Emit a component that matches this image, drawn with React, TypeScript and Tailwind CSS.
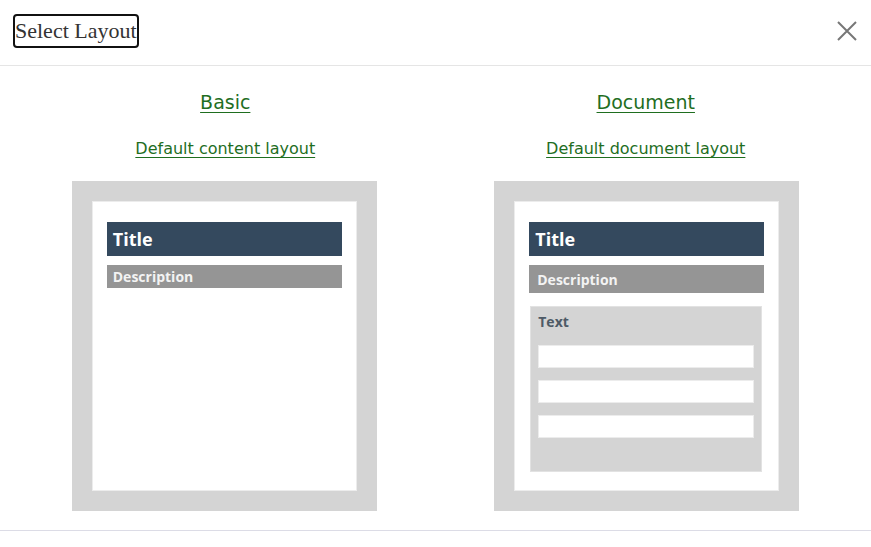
import React from "react";

function BasicPreview() {
  return (
    <div className="bg-[#d4d4d4] p-5 w-[305px] h-[330px]">
      <div className="bg-white h-full px-[14px] pt-[20px] border border-[#ececec]">
        <div className="bg-[#34495e] h-[34px] flex items-center px-[6px] text-white text-[18px] font-bold font-['Open_Sans',sans-serif]">
          Title
        </div>
        <div className="mt-[9px] bg-[#959595] h-[23px] flex items-center px-[6px] text-[#f3f3f3] text-[14px] font-bold font-['Open_Sans',sans-serif]">
          Description
        </div>
      </div>
    </div>
  );
}

function DocumentPreview() {
  return (
    <div className="bg-[#d4d4d4] p-5 w-[305px] h-[330px]">
      <div className="bg-white h-full px-[14px] pt-[20px] border border-[#ececec]">
        <div className="bg-[#34495e] h-[34px] flex items-center px-[6px] text-white text-[18px] font-bold font-['Open_Sans',sans-serif]">
          Title
        </div>
        <div className="mt-[9px] bg-[#959595] h-[28px] flex items-center px-[8px] text-[#f3f3f3] text-[14px] font-bold font-['Open_Sans',sans-serif]">
          Description
        </div>
        <div className="mt-[13px] ml-[1px] mr-[2px] bg-[#d4d4d4] h-[166px] border border-[#e2e2e2] px-[7px] pt-[5px]">
          <div className="text-[#4e5a66] text-[14px] font-bold font-['Open_Sans',sans-serif] leading-[20px]">
            Text
          </div>
          <div className="mt-[13px] flex flex-col gap-[12px]">
            <div className="bg-white h-[23px] border border-[#ececec]" />
            <div className="bg-white h-[23px] border border-[#ececec]" />
            <div className="bg-white h-[23px] border border-[#ececec]" />
          </div>
        </div>
      </div>
    </div>
  );
}

const layouts = [
  { name: "Basic", desc: "Default content layout", preview: <BasicPreview />, shift: "-ml-[2px]" },
  { name: "Document", desc: "Default document layout", preview: <DocumentPreview />, shift: "ml-[2px]" },
];

export default function App() {
  return (
    <div className="w-[871px] h-[547px] bg-white">
      {/* Header */}
      <div className="h-[66px] border-b border-[#e5e5e5] flex items-start justify-between pl-[13px] pr-[12px] pt-[14px]">
        <h2 className="border-2 border-[#111] rounded-[4px] h-[34px] flex items-center text-[22px] text-[#333] font-['Liberation_Serif',serif] leading-none">
          Select Layout
        </h2>
        <button className="mt-[5px] w-[24px] h-[24px] flex items-center justify-center text-[#777]">
          <svg width="22" height="22" viewBox="0 0 22 22" fill="none" stroke="currentColor" strokeWidth="2">
            <path d="M2 2 L20 20 M20 2 L2 20" />
          </svg>
        </button>
      </div>

      {/* Body */}
      <div className="px-[15px] grid grid-cols-2 border-b border-[#dcdce6] pb-[19px]">
        {layouts.map((l) => (
          <div key={l.name} className="flex flex-col items-center">
            <a href="#" className="mt-[23px] text-[19px] leading-[26px] text-[#1f6e1f] underline underline-offset-[3px] font-['DejaVu_Sans',sans-serif]">
              {l.name}
            </a>
            <a href="#" className="mt-[23px] text-[16px] leading-[22px] text-[#1f6e1f] underline underline-offset-[3px] font-['DejaVu_Sans',sans-serif]">
              {l.desc}
            </a>
            <div className={`mt-[21px] ${l.shift}`}>{l.preview}</div>
          </div>
        ))}
      </div>
    </div>
  );
}
